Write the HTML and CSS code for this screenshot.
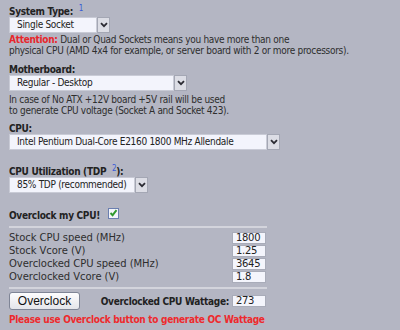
FILE: index.html
```html
<!DOCTYPE html>
<html>
<head>
<meta charset="utf-8">
<link rel="stylesheet" href="styles.css">
</head>
<body>
<div class="form">
  <div class="label label-first">System Type: <sup class="ref">1</sup></div>
  <div class="select w-sys"><span class="select-text">Single Socket</span><span class="select-btn"><svg width="8" height="6" viewBox="0 0 8 6"><path d="M1 1.2 L4 4.2 L7 1.2" fill="none" stroke="#2b2b33" stroke-width="1.8"/></svg></span></div>
  <p class="note"><b class="warn">Attention:</b> Dual or Quad Sockets means you have more than one<br>physical CPU (AMD 4x4 for example, or server board with 2 or more processors).</p>

  <div class="label label-mb">Motherboard:</div>
  <div class="select w-mb"><span class="select-text">Regular - Desktop</span><span class="select-btn"><svg width="8" height="6" viewBox="0 0 8 6"><path d="M1 1.2 L4 4.2 L7 1.2" fill="none" stroke="#2b2b33" stroke-width="1.8"/></svg></span></div>
  <p class="note note-mb">In case of No ATX +12V board +5V rail will be used<br>to generate CPU voltage (Socket A and Socket 423).</p>

  <div class="label label-cpu">CPU:</div>
  <div class="select w-cpu"><span class="select-text">Intel Pentium Dual-Core E2160 1800 MHz Allendale</span><span class="select-btn"><svg width="8" height="6" viewBox="0 0 8 6"><path d="M1 1.2 L4 4.2 L7 1.2" fill="none" stroke="#2b2b33" stroke-width="1.8"/></svg></span></div>

  <div class="label label-tdp">CPU Utilization (TDP <sup class="ref">2</sup>):</div>
  <div class="select w-tdp"><span class="select-text">85% TDP (recommended)</span><span class="select-btn"><svg width="8" height="6" viewBox="0 0 8 6"><path d="M1 1.2 L4 4.2 L7 1.2" fill="none" stroke="#2b2b33" stroke-width="1.8"/></svg></span></div>

  <div class="label oc-row">Overclock my CPU! <span class="check"><svg width="9" height="8" viewBox="0 0 9 8"><path d="M1.5 4 L3.6 6.2 L7.5 1.2" fill="none" stroke="#2f9a2f" stroke-width="1.9"/></svg></span></div>

  <div class="sep"></div>
  <div class="params">
    <span class="param-label">Stock CPU speed (MHz)</span><span class="field">1800</span>
    <span class="param-label">Stock Vcore (V)</span><span class="field">1.25</span>
    <span class="param-label">Overclocked CPU speed (MHz)</span><span class="field">3645</span>
    <span class="param-label">Overclocked Vcore (V)</span><span class="field">1.8</span>
  </div>
  <div class="sep sep2"></div>

  <div class="result-row">
    <span class="button">Overclock</span>
    <span class="result-label">Overclocked CPU Wattage:</span>
    <span class="field">273</span>
  </div>
  <p class="hint">Please use Overclock button to generate OC Wattage</p>
</div>
</body>
</html>
```
FILE: styles.css
```css
html, body {
  margin: 0;
  padding: 0;
  background: #b4b6c3;
}
body {
  font-family: "DejaVu Sans Condensed", "DejaVu Sans", sans-serif;
  font-size: 10px;
  line-height: 11px;
  letter-spacing: -0.3px;
  color: #2e2e2e;
}
.form {
  padding: 6px 0 0 9px;
  width: 258px;
}
.label {
  font-weight: bold;
  color: #222;
  line-height: 11px;
  white-space: nowrap;
}
.ref {
  font-size: 8px;
  font-weight: normal;
  color: #3a5bd6;
  vertical-align: 4px;
  line-height: 0;
  margin-left: 3px;
}
.label-mb { margin-top: 8px; }
.label-cpu { margin-top: 7px; }
.label-tdp { margin-top: 16px; }

.select {
  display: flex;
  height: 16px;
}
.select-text {
  flex: 1;
  box-sizing: border-box;
  background: #f3f4fc;
  border: 1px solid #c9cbd6;
  padding-left: 7px;
  line-height: 14px;
  color: #222;
  white-space: nowrap;
}
.select-btn {
  width: 13px;
  box-sizing: border-box;
  background: #dcdde5;
  border: 1px solid #a4a7b4;
  display: flex;
  align-items: center;
  justify-content: center;
}
.w-sys { width: 101px; }
.w-mb { width: 178px; }
.w-cpu { width: 271px; }
.w-tdp { width: 139px; }

.note {
  margin: 1px 0 0;
  line-height: 11px;
  white-space: nowrap;
}
.note-mb { margin-top: 3px; }
.warn { color: #e8262b; }

.oc-row {
  margin-top: 15px;
}
.check {
  display: inline-block;
  width: 11px;
  height: 11px;
  box-sizing: border-box;
  border: 1px solid #6b7fb0;
  background: #f4f5fb;
  margin-left: 5px;
}
.check svg {
  display: block;
}

.sep {
  margin-top: 5px;
  height: 2px;
  background: #d3d4dc;
}
.sep2 { margin-top: 4px; }

.params {
  margin-top: 4px;
  display: grid;
  grid-template-columns: 1fr 34px;
  row-gap: 1px;
  padding-right: 1px;
}
.param-label {
  font-family: "DejaVu Sans", sans-serif;
  letter-spacing: -0.05px;
  line-height: 12px;
  white-space: nowrap;
}
.field {
  box-sizing: border-box;
  height: 12px;
  width: 34px;
  background: #f4f5fc;
  border: 1px solid #a9acb9;
  padding-left: 3px;
  font-family: "DejaVu Sans", sans-serif;
  line-height: 10px;
  color: #222;
}

.result-row {
  margin-top: 3px;
  display: flex;
  align-items: center;
  padding-right: 1px;
}
.button {
  box-sizing: border-box;
  width: 71px;
  height: 18px;
  border: 1px solid #7f8596;
  border-radius: 3px;
  background: linear-gradient(#fdfdfe, #e4e5ea);
  font-family: "Liberation Sans", Arial, sans-serif;
  font-size: 12px;
  letter-spacing: 0;
  line-height: 16px;
  text-align: center;
  color: #111;
}
.result-label {
  margin-left: auto;
  margin-right: 3px;
  font-weight: bold;
  color: #222;
  white-space: nowrap;
}
.hint {
  margin: 4px 0 0;
  font-weight: bold;
  color: #ee2a2d;
  white-space: nowrap;
}
```
